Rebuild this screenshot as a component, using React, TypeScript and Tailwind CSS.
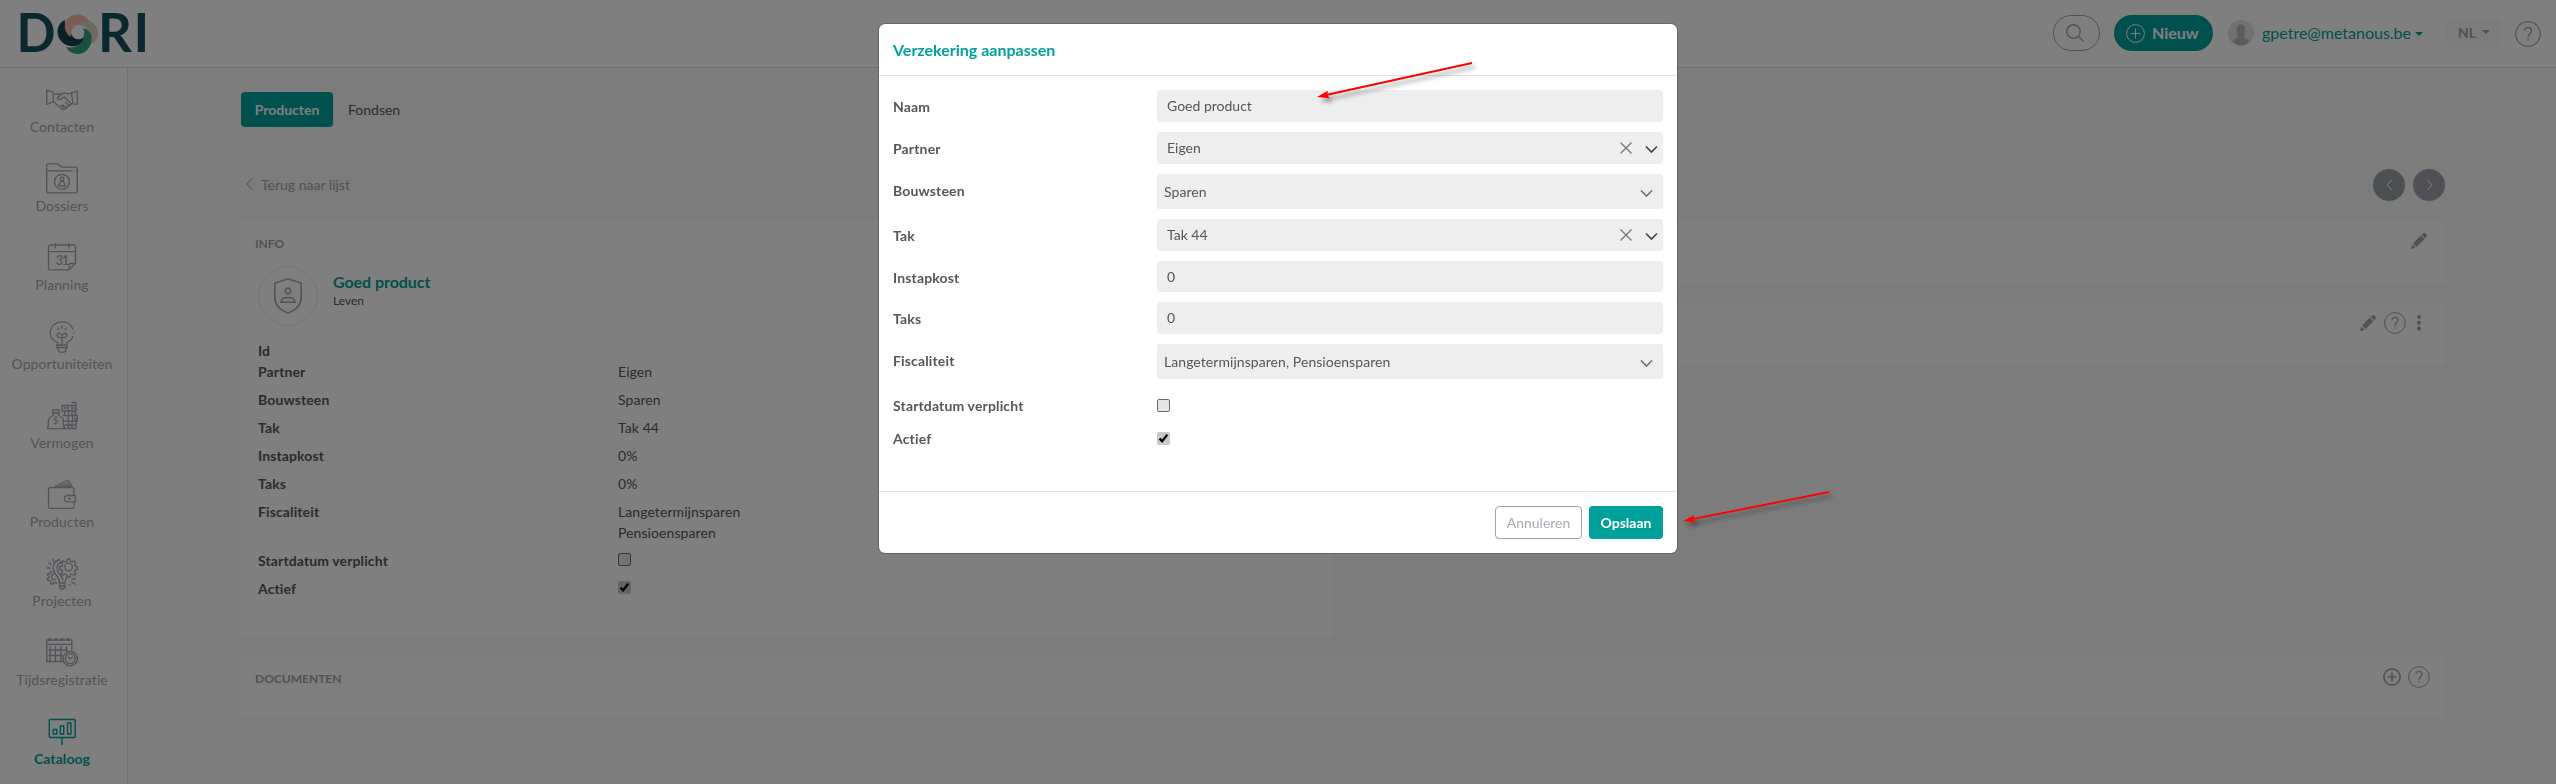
import type { ReactNode } from 'react';

const icons: Record<string, ReactNode> = {
  Contacten: (
    <>
      <path d="M.7 6.200l6.600 2v9.600L.7 20.300z" />
      <path d="M31.300 7l-5.800 1.800 1.500 11 4.300.5z" />
      <path d="M7.300 10.200l8-.2 3-1.200 4 1 3.500-.6M7.300 17.500l1.800 1.500 5.500 5c1.500 1.500 3 2 4.500 1l5-4.300 2.200-1.500" />
      <path d="M15.500 10l-4.300 4.300c.8 1.700 3 1.500 5 0l2.200-1.500 6 6.300c1 1.500-.5 2.700-2 1.700l-3-2.600M20.800 21.700c.5 1.200-.8 2.200-2 1.300l-2.300-2.200M18 23.500l-3.300-2.300" />
    </>
  ),
  Dossiers: (
    <>
      <path d="M.7 28.500V2.200c0-.8.500-1.300 1.300-1.300h9.500l4.500 3.200h14c.8 0 1.300.5 1.300 1.300v23.100c0 .8-.5 1.300-1.300 1.300H2c-.8 0-1.300-.5-1.300-1.300z" />
      <path d="M1 7.800h24.500M27.500 7.800h1M30 7.800h1.300" />
      <circle cx="16" cy="18.800" r="7.500" />
      <circle cx="16" cy="16" r="1.800" />
      <path d="M12.500 23l1-2.500 1.300-2.200h2.400l1.300 2.200 1 2.500z" />
    </>
  ),
  Planning: (
    <>
      <path d="M29.500 21.500V5.500c0-1.500-1-2.500-2-2.500h-23c-1 0-2 1-2 2.500v20.300c0 1 1 2 2 2h18.500l6.500-6.300h-5c-.8 0-1.300.6-1.300 1.300v5" />
      <path d="M2.500 9.700h27M9.500 1v5.500M22.800 1v5.500" />
      <text x="9.8" y="23" fontSize="12.5" letterSpacing="-1" fill="currentColor" stroke="currentColor" strokeWidth=".2">31</text>
    </>
  ),
  Opportuniteiten: (
    <>
      <path d="M11.500 24v-2.500C6.500 19.500 4.200 16 4.200 11.800A11.400 11.400 0 0 1 16 .8a11.400 11.400 0 0 1 11 7.700M27.500 11v1.500M27 15c-.9 3.200-3.500 5.500-6.500 6.500V24" />
      <path d="M10.800 24h10.400v2.500H10.800zM12 26.500v2c0 3.800 8 3.800 8 0v-2" />
      <path d="M16 23.500v-10M16 14.500c-3-4.500-6-1.500-4.500.8s4.500.7 4.500.7 3 1.600 4.500-.7-1.500-5.300-4.500-.8M16 4.500v3.500M11.500 6.500l1.500 2.300M20.500 6.500L19 8.800" />
    </>
  ),
  Vermogen: (
    <>
      <path d="M7.300 13.500v2c-4 1.500-5 3.500-5 6v5.200H1.500v2h16.800v-2h-.8v-5.200c0-2.500-1-4.500-5-6v-2M6.500 10h6.800v3H6.500z" />
      <path d="M16 5.500h14V11H16zM18.500 11h11v4.500h-11zM16.500 15.500h14.800V21H16.500M18.500 21h11.500v7.500H18M18.500 25H30M25.500 2.500h4.500v3M22 5.500V11M26 5.500V11M17.500 8h3M27.500 8h2.300M22.500 11v4.500M26 11v4.500M22 15.500V21M26.500 15.500V21M28 18.500h3M22.500 21v7.500M26 21v7.500" />
      <text x="6.8" y="24" fontSize="10" fill="currentColor" stroke="none">$</text>
    </>
  ),
  Producten: (
    <>
      <path d="M28 17.300V10.500c0-1-.8-1.800-1.800-1.800H4.300c-1 0-1.800.8-1.800 1.800v17c0 1 .8 1.800 1.800 1.800h22c1 0 1.800-.8 1.800-1.800v-3.700" />
      <path d="M21.500 16.500h7.800v6.300h-7.800a3.100 3.100 0 0 1 0-6.300zM7.500 8.500L21 1.500l2.200.8L26.500 8.500M10.500 8.500L22.500 3.800M15 8.500l8.800-3M19.500 8.500l5.300-1.500" />
      <circle cx="23.500" cy="19.600" r=".7" />
    </>
  ),
  Projecten: (
    <>
      <circle cx="22.500" cy="9" r="3.800" />
      <path d="M21.300 1h2.600l.5 2.300 1.700.7 2-1.300 1.800 1.900-1.300 2 .7 1.600 2.300.5v2.600l-2.300.5-.7 1.700 1.300 2-1.800 1.800-2-1.300-1.700.7-.5 2.300h-2.600l-.5-2.300-1.700-.7-2 1.300-1.800-1.800 1.300-2-.7-1.700-2.300-.5V8.700l2.300-.5.7-1.600-1.300-2 1.800-1.900 2 1.300 1.700-.7z" />
      <path d="M14 1.500C8 2.500 6.500 8 7.500 12c1 4.500 5.500 6.500 6 12.500M17 3.500C12 4 10 8.500 11.500 12.500c1 2.500 5 6 5.500 10M21.500 18.500c-2 2.500-2.500 4-2.700 6.500M13.500 25h5.500v4l-1.500 2h-2.500l-1.500-2zM13.500 28H19" />
      <path d="M6.500 13.500l-1.800.3-.5 1.700-2-.2-.7 1.800 1.500 1.200-.2 1.600-1.800 1 .8 1.800 2-.2 1.200 1.200-.2 2 1.900.6 1.200-1.600 1.600-.2 1.300 1.200M9.500 16c-3-.5-4.500 1.500-4 3.500s2.500 3 4.500 2" />
      <path d="M7 1l1.200 4M2.500 4.500L5.500 7M.8 10h3.500M25.500 21l4.500-.3M25 23.500l4.500 3M23.500 26v1.500" />
    </>
  ),
  Tijdsregistratie: (
    <>
      <path d="M17.500 24.500H.8V3h25v10M1 7.300h24.800M4 9v15M9.500 9v15M15 9v15M20.500 9v6M2.500 13h19M2.500 18.500h14.500" />
      <path d="M3.800 1v3M10 1v3M16 1v3M22 1v3" strokeWidth="2.5" />
      <circle cx="24.300" cy="21.700" r="7.200" />
      <circle cx="24.300" cy="21.700" r="5" />
      <path d="M21.500 20l2.500 2 3-2" />
    </>
  ),
  Cataloog: (
    <>
      <path d="M4.500 3.500h23.800c.6 0 .9.300.9.900v16.200c0 .6-.3.900-.9.900H4.200c-.6 0-.9-.3-.9-.9V4.400c0-.6.300-.9.900-.9M16 21.500v7M15 28h2" strokeWidth="1.4" />
      <path d="M7.300 13.500h3.500v4.500H7.300zM14.300 10h3.500v8h-3.500zM21.500 7h3.500v11h-3.500z" strokeWidth="1.4" />
    </>
  ),
};

const details: [string, ReactNode][] = [
  ['Partner', 'Eigen'],
  ['Bouwsteen', 'Sparen'],
  ['Tak', 'Tak 44'],
  ['Instapkost', '0%'],
  ['Taks', '0%'],
  ['Fiscaliteit', <>Langetermijnsparen<br />Pensioensparen</>],
];

function Logo() {
  return (
    <svg width="160" height="67" viewBox="-20 -12 160 67" className="block">
      <g fill="#174f60" fontFamily="Lato" fontWeight="700" fontSize="53">
        <text x="-3.5" y="40" textLength="39" lengthAdjust="spacingAndGlyphs">D</text>
        <text x="78" y="40" textLength="34" lengthAdjust="spacingAndGlyphs">R</text>
        <text x="113.5" y="40">I</text>
      </g>
      <path d="M57 8c10-3 21 3 21 13 0 7-5 12-12 12 5-5 5-14-1-18-3-2-8-3-10 0z" fill="#d8d2c6" />
      <path d="M71 22c3 10-4 20-13 20-6 0-10-3-12-7 8 2 16-2 18-10-1-4-2-7-4-9 5 0 9 2 11 6z" fill="#36a284" />
      <path d="M45 8c-8 3-10 14-4 21 5 6 15 7 20 2 2-2 3-4 3-6-5 5-13 1-13-5-4-2-7-7-6-12z" fill="#14404f" />
      <path d="M69 9C63-1 47 1 45 12c-1 6 2 11 6 13-1-9 6-15 12-15 3 0 5 0 6-1z" fill="#f5b8a8" />
      <circle cx="58" cy="20.500" r="6.300" fill="#fff" />
    </svg>
  );
}

function Pencil() {
  return (
    <svg width="16" height="16" viewBox="0 0 16 16" fill="currentColor">
      <path d="M0 16l1.200-4.600 3.400 3.400zM2 10.400L9.800 2.600l3.600 3.600-7.800 7.800zM10.700 1.800l1-1c1-1 2-1 2.900-.2l.8.800c.8.900.8 1.900-.2 2.900l-1 1z" />
    </svg>
  );
}

function Help({ size }: { size: number }) {
  return (
    <svg width={size} height={size} viewBox="0 0 22 22" fill="none" stroke="currentColor">
      <circle cx="11" cy="11" r="10.400" />
      <path d="M8 8.300C8 4.500 14 4.500 14 8.300c0 2.200-3 2.700-3 5.400M11 15.200v1.300" strokeWidth="1.2" />
    </svg>
  );
}

function Chevron({ className }: { className: string }) {
  return (
    <svg width="13" height="9" viewBox="0 0 13 9" fill="none" stroke="currentColor" strokeWidth="1.7" className={className}>
      <path d="M1 1.500l5.500 5.500L12 1.500" />
    </svg>
  );
}

function Check({ checked = false }: { checked?: boolean }) {
  if (!checked) return <span className="block size-[13px] rounded-[2px] border border-[#6b6b6b] bg-[#e6e6e6]" />;
  return (
    <span className="block size-[13px] rounded-[2px] bg-[#c8c8c8]">
      <svg width="13" height="13" viewBox="0 0 13 13" fill="none" stroke="#000" strokeWidth="2.3">
        <path d="M2.500 6.700l2.600 2.500L10.300 2.600" />
      </svg>
    </span>
  );
}

function Sidebar() {
  return (
    <nav className="w-32 shrink-0 border-r border-[#e0e0e0] bg-white pr-[3px] tracking-[0.08px]">
      {Object.entries(icons).map(([name, icon]) => (
        <div
          key={name}
          className={`flex h-[79px] flex-col items-center pt-4 leading-[21px] ${name === 'Cataloog' ? 'font-bold text-[#00a19a]' : 'text-[#a5a6b2]'}`}
        >
          <svg width="32" height="32" viewBox="0 0 32 32" fill="none" stroke="currentColor" strokeWidth="1.3" strokeLinejoin="round" className="block shrink-0">
            {icon}
          </svg>
          {name}
        </div>
      ))}
    </nav>
  );
}

function TopBar() {
  return (
    <header className="flex h-[68px] items-start border-b border-[#e0e0e0] bg-white pr-[15px]">
      <Logo />
      <div className="ml-auto flex items-start pt-[15px]">
        <div className="flex h-9 w-[47px] items-center justify-center rounded-full border border-[#a1a2ae] pr-1 text-[#a1a2ae]">
          <svg width="18" height="18" viewBox="0 0 18 18" fill="none" stroke="currentColor" strokeWidth="1.4">
            <circle cx="7.500" cy="7.500" r="6.700" />
            <path d="M12.300 12.300l5 5" />
          </svg>
        </div>
        <div className="ml-3.5 flex h-9 w-[99px] items-center rounded-full bg-[#00a19a] pl-[12px] text-base font-bold text-white">
          <svg width="19" height="19" viewBox="0 0 19 19" fill="none" stroke="currentColor" className="mr-[7px]">
            <circle cx="9.500" cy="9.500" r="8.900" />
            <path d="M9.500 4.500v10M4.500 9.500h10" />
          </svg>
          Nieuw
        </div>
        <svg width="26" height="26" viewBox="0 0 26 26" className="ml-[15px] mt-[5px]">
          <circle cx="13" cy="13" r="13" fill="#e2e2e2" />
          <path d="M8.700 10c0-7.500 8.600-7.500 8.600 0 0 4-1.300 5-1.300 7l5.500 3.500c-4.500 6.500-12.500 6.500-17 0L10 17c0-2-1.300-3-1.300-7z" fill="#b8b8b8" />
        </svg>
        <div className="ml-2 mt-[6px] w-[149px] whitespace-nowrap text-base leading-6 text-[#00a19a]">gpetre@metanous.be</div>
        <span className="ml-[4px] mt-[17px] size-0 border-x-4 border-t-4 border-x-transparent border-t-[#00a19a]" />
        <div className="ml-[23px] mt-[3px] flex h-[29px] w-[55px] items-center rounded-md bg-[#f9f9f9] pl-3 font-bold text-[#a1a2ae]">
          NL
          <span className="ml-[6px] mb-0.5 size-0 border-x-4 border-t-4 border-x-transparent border-t-[#a1a2ae]" />
        </div>
        <div className="ml-3.5 mt-[6px] text-[#a1a2ae]"><Help size={26} /></div>
      </div>
    </header>
  );
}

function Arrow({ className, w, h }: { className: string; w: number; h: number }) {
  const len = Math.hypot(w, h);
  const angle = (-Math.atan2(h, w) * 180) / Math.PI;
  return (
    <svg width={w} height={h} className={`pointer-events-none fixed overflow-visible drop-shadow-[3px_4px_2px_rgba(0,0,0,0.4)] ${className}`}>
      <g transform={`translate(0 ${h}) rotate(${angle})`}>
        <path d={`M8 0H${len}`} stroke="#f00" strokeWidth="1.9" />
        <path d="M0 0L12-3.800 10.500 0 12 3.800z" fill="#f00" />
      </g>
    </svg>
  );
}

function Row({ label, children, className = '' }: { label: string; children: ReactNode; className?: string }) {
  return (
    <div className={`flex ${className}`}>
      <div className="w-[264px] shrink-0 pt-[6px] font-bold tracking-[0.15px]">{label}</div>
      {children}
    </div>
  );
}

function Field({ value, clearable = false, className = 'h-8' }: { value: string; clearable?: boolean; className?: string }) {
  return (
    <div className={`flex flex-1 items-center rounded-[4px] bg-[#eee] pb-px pl-[10px] pr-[5px] ${className}`}>
      {value}
      {clearable && (
        <>
          <svg width="12" height="12" viewBox="0 0 12 12" fill="none" stroke="#777" strokeWidth="1.3" className="ml-auto mr-[13px]">
            <path d="M.5.5l11 11M11.500.5l-11 11" />
          </svg>
          <Chevron className="mt-1 text-[#444]" />
        </>
      )}
    </div>
  );
}

function Select({ value }: { value: string }) {
  return (
    <div className="flex h-[35px] flex-1 items-center justify-between rounded-[2px] bg-[#eee] pl-[7px] pr-[10px] tracking-[0.06px]">
      {value}
      <Chevron className="mt-[3px] text-[#6c757d]" />
    </div>
  );
}

function EditDialog() {
  return (
    <div className="fixed inset-0 flex items-start justify-center bg-black/50 pt-[23px]">
      <div className="w-[800px] rounded-[7px] border border-black/20 bg-white bg-clip-padding text-[#55565a]">
        <h2 className="h-[52px] border-b border-[#e3e3e3] pl-3.5 pt-[14px] text-base font-bold leading-6 text-[#00a19a]">
          Verzekering aanpassen
        </h2>
        <div className="flex h-[415px] flex-col gap-[10px] px-3.5 pt-3.5">
          <Row label="Naam"><Field value="Goed product" /></Row>
          <Row label="Partner"><Field value="Eigen" clearable /></Row>
          <Row label="Bouwsteen"><Select value="Sparen" /></Row>
          <Row label="Tak"><Field value="Tak 44" clearable /></Row>
          <Row label="Instapkost"><Field value="0" className="h-[31px]" /></Row>
          <Row label="Taks"><Field value="0" /></Row>
          <Row label="Fiscaliteit"><Select value="Langetermijnsparen, Pensioensparen" /></Row>
          <Row label="Startdatum verplicht" className="h-[23px]"><div className="pt-[10px]"><Check /></div></Row>
          <Row label="Actief"><div className="pt-[10px]"><Check checked /></div></Row>
        </div>
        <div className="flex h-[62px] justify-end gap-[7px] border-t border-[#e3e3e3] px-3.5 pt-3.5">
          <button className="h-[33px] w-[87px] rounded-[4px] border border-[#a1a2ae] text-[#a9aab6]">Annuleren</button>
          <button className="h-[33px] w-[74px] rounded-[4px] bg-[#00a19a] font-bold text-white">Opslaan</button>
        </div>
      </div>
    </div>
  );
}

function CardTitle({ children }: { children: ReactNode }) {
  return <h3 className="text-xs font-bold leading-[18px] text-[#a1a2ae]">{children}</h3>;
}

export default function App() {
  return (
    <div className="flex h-[784px] flex-col overflow-hidden bg-[#f8f8f8] font-[Lato,sans-serif] text-sm leading-[21px] text-[#55565a]">
      <TopBar />
      <div className="flex flex-1">
        <Sidebar />
        <main className="flex-1 pl-[113px] pr-[111px] pt-6">
          <div className="flex h-[35px] items-center gap-[15px]">
            <button className="h-[35px] w-[92px] rounded-[4px] bg-[#00a19a] font-bold text-white">Producten</button>
            Fondsen
          </div>
          <div className="mt-[42px] flex h-8 items-center text-[#a1a2ae]">
            <svg width="7" height="12" viewBox="0 0 7 12" fill="none" stroke="currentColor" className="ml-[5px] mr-[8px] mb-0.5">
              <path d="M6.500.5L1 6l5.500 5.500" />
            </svg>
            <span className="pb-0.5">Terug naar lijst</span>
            <div className="ml-auto flex gap-2 text-white">
              <span className="flex size-8 items-center justify-center rounded-full bg-[#9ba1a6]">
                <svg width="7" height="12" viewBox="0 0 7 12" fill="none" stroke="currentColor"><path d="M6 .5L1 6l5 5.500" /></svg>
              </span>
              <span className="flex size-8 items-center justify-center rounded-full bg-[#a1a2ae]">
                <svg width="7" height="12" viewBox="0 0 7 12" fill="none" stroke="currentColor"><path d="M1 .5L6 6l-5 5.500" /></svg>
              </span>
            </div>
          </div>
          <div className="mt-[21px] grid grid-cols-2 items-start gap-5">
            <section className="h-[415px] rounded-[4px] bg-white px-3.5 pt-[13px]">
              <CardTitle>INFO</CardTitle>
              <div className="ml-[3px] mt-[13px] flex h-[60px]">
                <div className="flex size-[60px] items-center justify-center rounded-full border border-[#eaeaea] text-[#a1a2ae]">
                  <svg width="28" height="36" viewBox="0 0 28 36" fill="none" stroke="currentColor" strokeWidth="1.5">
                    <path d="M14 .8l13.200 4.500v14C27.200 27 22 32 14 35.200 6 32 .8 27 .8 19.300v-14z" />
                    <circle cx="14" cy="13" r="2.700" />
                    <path d="M7 24.300c0-6.500 14-6.500 14 0z" />
                  </svg>
                </div>
                <div className="ml-[15px] pt-1">
                  <div className="text-base font-bold leading-6 tracking-[-0.05px] text-[#00a19a]">Goed product</div>
                  <div className="-mt-[2px] text-xs leading-[18px]">Leven</div>
                </div>
              </div>
              <dl className="ml-[3px] mt-[14px] tracking-[0.08px]">
                <dt className="font-bold">Id</dt>
                {details.map(([label, value]) => (
                  <div key={label} className="mb-[7px] flex">
                    <dt className="w-[360px] font-bold tracking-[0.12px]">{label}</dt>
                    <dd>{value}</dd>
                  </div>
                ))}
                <div className="mb-[7px] flex">
                  <dt className="w-[360px] font-bold tracking-[0.12px]">Startdatum verplicht</dt>
                  <dd className="pt-[3px]"><Check /></dd>
                </div>
                <div className="flex">
                  <dt className="w-[360px] font-bold tracking-[0.12px]">Actief</dt>
                  <dd className="pt-[3px]"><Check checked /></dd>
                </div>
              </dl>
            </section>
            <div className="flex flex-col gap-5 text-[#a1a2ae]">
              <section className="flex h-[61px] justify-end rounded-[4px] bg-white pr-[18px] pt-[11px]"><Pencil /></section>
              <section className="flex h-[61px] items-start justify-end rounded-[4px] bg-white pr-6 pt-[9px]">
                <span className="mr-2 mt-[3px]"><Pencil /></span>
                <Help size={22} />
                <svg width="4" height="16" viewBox="0 0 4 16" fill="currentColor" className="ml-[11px] mt-[3px]">
                  <circle cx="2" cy="2" r="2" /><circle cx="2" cy="7.700" r="2" /><circle cx="2" cy="13.400" r="2" />
                </svg>
              </section>
            </div>
          </div>
          <section className="mt-5 flex h-[61px] items-start justify-between rounded-[4px] bg-white pl-3.5 pr-[15px] pt-[9px] text-[#a1a2ae]">
            <div className="pt-1"><CardTitle>DOCUMENTEN</CardTitle></div>
            <div className="flex items-center gap-[7px]">
              <svg width="18" height="18" viewBox="0 0 18 18" fill="none" stroke="currentColor" strokeWidth="1.7">
                <circle cx="9" cy="9" r="8.100" />
                <path d="M9 4.500v9M4.500 9h9" />
              </svg>
              <Help size={22} />
            </div>
          </section>
        </main>
      </div>
      <EditDialog />
      <Arrow className="left-[1317px] top-[63px]" w={155} h={34} />
      <Arrow className="left-[1683px] top-[492px]" w={146} h={29} />
    </div>
  );
}
